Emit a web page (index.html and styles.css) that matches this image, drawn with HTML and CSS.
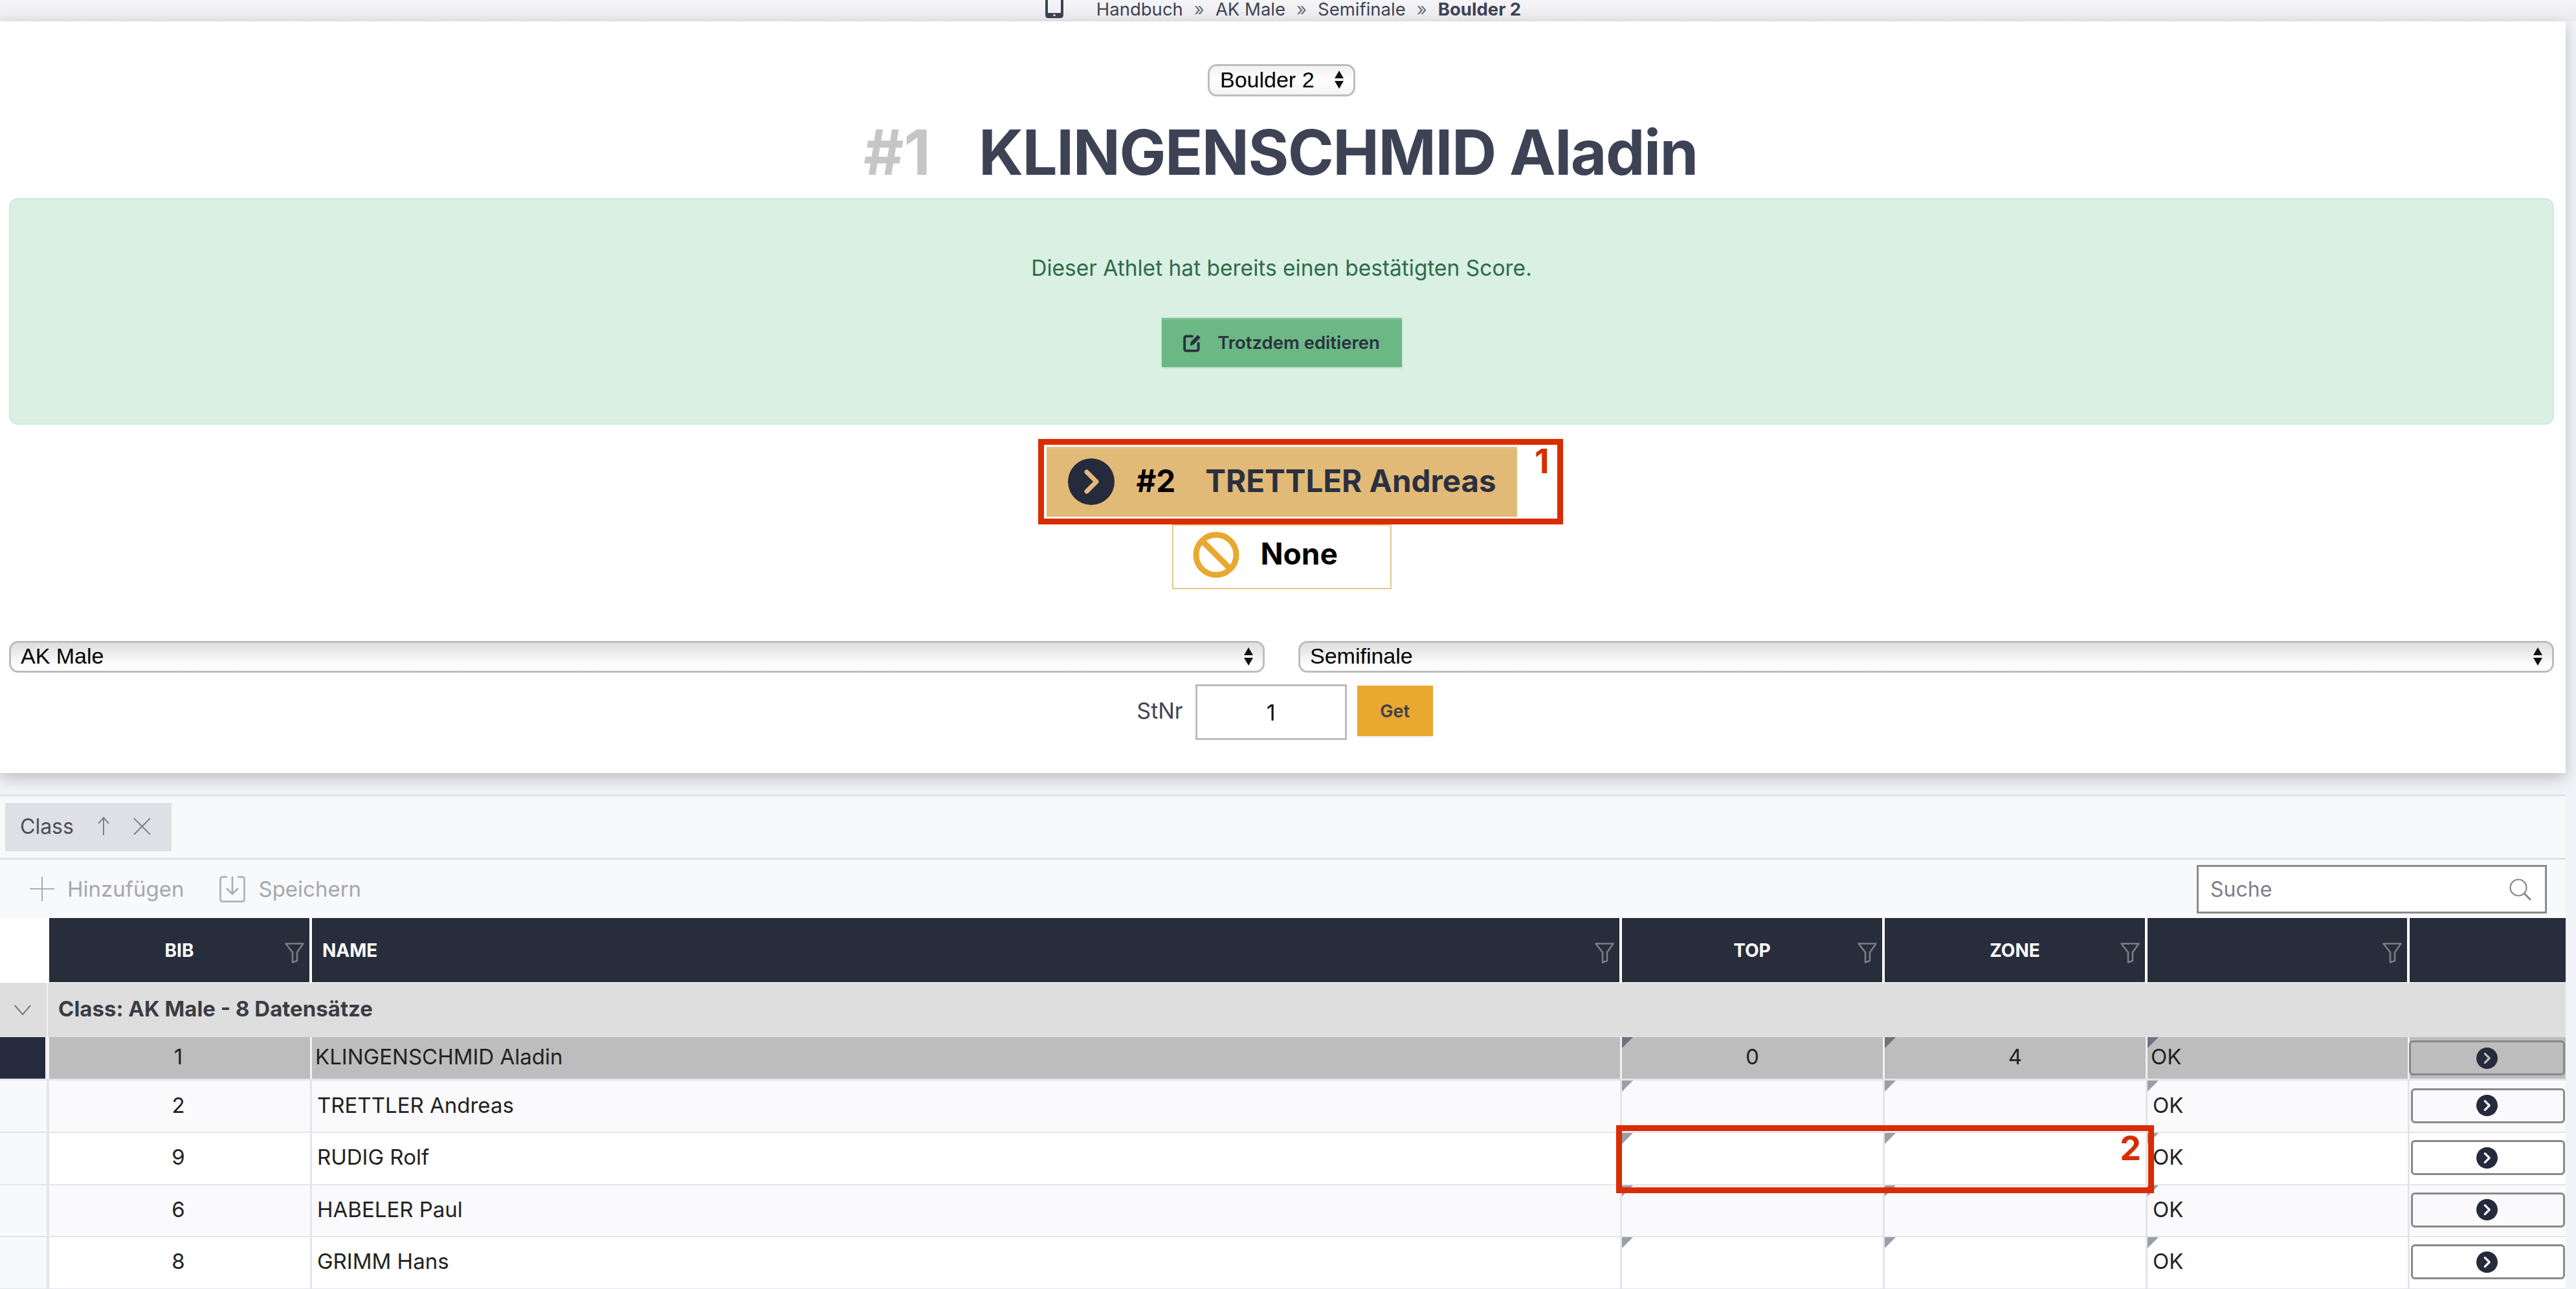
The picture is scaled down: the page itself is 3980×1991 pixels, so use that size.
FILE: index.html
```html
<!DOCTYPE html>
<html lang="en">
<head>
    <meta charset="UTF-8">
    <meta name="viewport" content="width=device-width, initial-scale=1.0">
    <title>Boulder 2</title>
    <link rel="stylesheet" href="styles.css">
</head>
<body>
    <svg class="icon-defs" width="0" height="0">
        <symbol id="i-filter" viewBox="0 0 30 32">
            <path d="M1.5 1.5H28.5L19 15V28L12 30.5V15Z" fill="none" stroke="#7c7d82" stroke-width="2.6" stroke-linejoin="round"/>
        </symbol>
        <symbol id="i-go" viewBox="0 0 72 72">
            <circle cx="36" cy="36" r="36" fill="#252b3c"/>
            <path d="M29 21L44 36L29 51" fill="none" stroke="currentColor" stroke-width="7" stroke-linecap="round" stroke-linejoin="round"/>
        </symbol>
    </svg>

    <div class="topbar">
        <svg class="phone" width="30" height="28" viewBox="0 0 30 28">
            <path d="M3 0V23Q3 26 6 26H24Q27 26 27 23V0" fill="none" stroke="#3d4355" stroke-width="4"/>
            <rect x="3" y="20" width="24" height="7" fill="#3d4355"/>
            <circle cx="15" cy="23.500" r="1.600" fill="#fff"/>
        </svg>
        <nav class="crumbs">
            <span>Handbuch</span><span class="sep">»</span>
            <span>AK Male</span><span class="sep">»</span>
            <span>Semifinale</span><span class="sep">»</span>
            <b>Boulder 2</b>
        </nav>
    </div>

    <main class="panel">
        <div class="boulder-pick">
            <div class="select-wrap select-small">
                <select class="native-select"><option>Boulder 2</option></select>
                <svg class="select-arrows" viewBox="0 0 16 28"><path d="M8 0L15 12H1ZM8 28L1 16H15Z" fill="#111"/></svg>
            </div>
        </div>

        <h1 class="athlete-title"><span class="athlete-no">#1</span><span class="athlete-name">KLINGENSCHMID Aladin</span></h1>

        <div class="alert-done">
            <p>Dieser Athlet hat bereits einen bestätigten Score.</p>
            <button class="btn-edit">
                <svg width="30" height="30" viewBox="0 0 28 28">
                    <path d="M13 5H5Q2 5 2 8V23Q2 26 5 26H19Q22 26 22 23V15" fill="none" stroke="#2b3040" stroke-width="3.600" stroke-linecap="round"/>
                    <path d="M10 19L11 13L21 3L25 7L15 17Z" fill="#2b3040"/>
                </svg>
                Trotzdem editieren
            </button>
        </div>

        <div class="next-wrap">
            <button class="btn-next">
                <svg class="next-icon" width="72" height="72"><use href="#i-go"/></svg>
                <span class="next-no">#2</span>
                <span class="next-name">TRETTLER Andreas</span>
            </button>
            <div class="mark mark-next"><span class="mark-no">1</span></div>
        </div>
        <div class="none-box">
            <svg width="72" height="72" viewBox="0 0 72 72">
                <circle cx="36" cy="36" r="31" fill="none" stroke="#e9a82f" stroke-width="9"/>
                <path d="M14 14L58 58" stroke="#e9a82f" stroke-width="9"/>
            </svg>
            <span class="none-text">None</span>
        </div>

        <div class="class-selects">
            <div class="select-wrap">
                <select class="native-select"><option>AK Male</option></select>
                <svg class="select-arrows" viewBox="0 0 16 28"><path d="M8 0L15 12H1ZM8 28L1 16H15Z" fill="#111"/></svg>
            </div>
            <div class="select-wrap">
                <select class="native-select"><option>Semifinale</option></select>
                <svg class="select-arrows" viewBox="0 0 16 28"><path d="M8 0L15 12H1ZM8 28L1 16H15Z" fill="#111"/></svg>
            </div>
        </div>

        <div class="bib-form">
            <label for="stnr">StNr</label>
            <input id="stnr" type="text" value="1">
            <button class="btn-get">Get</button>
        </div>
    </main>

    <section class="grid-panel">
        <div class="group-bar">
            <div class="group-chip">
                <span>Class</span>
                <svg width="20" height="30" viewBox="0 0 20 30"><path d="M10 29V2M2 11L10 2L18 11" fill="none" stroke="#7d8087" stroke-width="2"/></svg>
                <svg width="27" height="27" viewBox="0 0 27 27"><path d="M1 1L26 26M26 1L1 26" fill="none" stroke="#7d8087" stroke-width="2"/></svg>
            </div>
        </div>

        <div class="toolbar">
            <div class="tool-left">
                <span class="tool">
                    <svg width="38" height="38" viewBox="0 0 38 38"><path d="M19 0V38M0 19H38" stroke="#a9abb0" stroke-width="2"/></svg>
                    Hinzufügen
                </span>
                <span class="tool">
                    <svg width="40" height="41" viewBox="0 0 40 41">
                        <path d="M12 1.500H5Q1.500 1.500 1.500 5V36Q1.500 39.500 5 39.500H35Q38.500 39.500 38.500 36V5Q38.500 1.500 35 1.500H28" fill="none" stroke="#a9abb0" stroke-width="2.500"/>
                        <path d="M20 1V27M11 19L20 28L29 19" fill="none" stroke="#a9abb0" stroke-width="2.500"/>
                    </svg>
                    Speichern
                </span>
            </div>
            <div class="search-box">
                <span>Suche</span>
                <svg width="34" height="34" viewBox="0 0 34 34">
                    <circle cx="14" cy="14" r="12.500" fill="none" stroke="#85878c" stroke-width="2.200"/>
                    <path d="M23 23L33 33" stroke="#85878c" stroke-width="3"/>
                </svg>
            </div>
        </div>

        <div class="grid">
            <div class="grid-row grid-head">
                <div class="head-gutter"></div>
                <div class="head-cell head-center">BIB<svg class="filter"><use href="#i-filter"/></svg></div>
                <div class="head-cell">NAME<svg class="filter"><use href="#i-filter"/></svg></div>
                <div class="head-cell head-center">TOP<svg class="filter"><use href="#i-filter"/></svg></div>
                <div class="head-cell head-center">ZONE<svg class="filter"><use href="#i-filter"/></svg></div>
                <div class="head-cell"><svg class="filter"><use href="#i-filter"/></svg></div>
                <div class="head-cell head-last"></div>
            </div>

            <div class="group-row">
                <div class="group-toggle">
                    <svg width="26" height="16" viewBox="0 0 26 16"><path d="M1 1L13 15L25 1" fill="none" stroke="#77797e" stroke-width="2"/></svg>
                </div>
                <div class="group-label">Class: AK Male - 8 Datensätze</div>
            </div>

            <div class="grid-row data-row row-selected">
                <div class="gutter"></div>
                <div class="cell cell-num cell-bib">1</div>
                <div class="cell">KLINGENSCHMID Aladin</div>
                <div class="cell cell-num flag">0</div>
                <div class="cell cell-num flag">4</div>
                <div class="cell flag">OK</div>
                <div class="cell cell-action"><button class="btn-row"><svg width="33" height="33"><use href="#i-go"/></svg></button></div>
            </div>
            <div class="grid-row data-row row-first row-alt">
                <div class="gutter"></div>
                <div class="cell cell-num cell-bib">2</div>
                <div class="cell">TRETTLER Andreas</div>
                <div class="cell flag"></div>
                <div class="cell flag"></div>
                <div class="cell flag">OK</div>
                <div class="cell cell-action"><button class="btn-row"><svg width="33" height="33"><use href="#i-go"/></svg></button></div>
            </div>
            <div class="grid-row data-row">
                <div class="gutter"></div>
                <div class="cell cell-num cell-bib">9</div>
                <div class="cell">RUDIG Rolf</div>
                <div class="cell flag"></div>
                <div class="cell flag"></div>
                <div class="cell flag">OK</div>
                <div class="cell cell-action"><button class="btn-row"><svg width="33" height="33"><use href="#i-go"/></svg></button></div>
            </div>
            <div class="grid-row data-row row-alt">
                <div class="gutter"></div>
                <div class="cell cell-num cell-bib">6</div>
                <div class="cell">HABELER Paul</div>
                <div class="cell flag"></div>
                <div class="cell flag"></div>
                <div class="cell flag">OK</div>
                <div class="cell cell-action"><button class="btn-row"><svg width="33" height="33"><use href="#i-go"/></svg></button></div>
            </div>
            <div class="grid-row data-row">
                <div class="gutter"></div>
                <div class="cell cell-num cell-bib">8</div>
                <div class="cell">GRIMM Hans</div>
                <div class="cell flag"></div>
                <div class="cell flag"></div>
                <div class="cell flag">OK</div>
                <div class="cell cell-action"><button class="btn-row"><svg width="33" height="33"><use href="#i-go"/></svg></button></div>
            </div>

            <div class="mark mark-cells"><span class="mark-no">2</span></div>
        </div>
    </section>
</body>
</html>
```

FILE: styles.css
```css
* {
    box-sizing: border-box;
}

html,
body {
    height: 100%;
}

body {
    margin: 0;
    overflow: hidden;
    background-color: #f2f3f8;
    color: #3d4355;
    font-family: Inter, "Liberation Sans", sans-serif;
    font-size: 33px;
}

button {
    font-family: inherit;
    border: none;
    padding: 0;
    cursor: pointer;
}

.icon-defs {
    position: absolute;
}

/* top bar */
.topbar {
    height: 33px;
    overflow: hidden;
    display: flex;
    justify-content: center;
    align-items: flex-start;
    gap: 50px;
    padding-right: 16px;
    background: linear-gradient(#f5f5f8, #ebebef);
    font-size: 27.5px;
}

.phone {
    flex: none;
}

.crumbs {
    display: flex;
    gap: 17px;
    line-height: 28px;
}

.crumbs .sep {
    color: #6a6f7e;
}

/* upper panel */
.panel {
    position: relative;
    z-index: 1;
    height: 1161px;
    margin-right: 16px;
    padding: 0 18px 0 14px;
    background-color: #fff;
    box-shadow: 0 8px 22px rgba(0, 0, 0, 0.22);
}

.boulder-pick {
    display: flex;
    justify-content: center;
    padding-top: 66px;
}

.select-wrap {
    position: relative;
    flex: 1;
    height: 49px;
}

.select-small {
    flex: none;
    width: 228px;
    height: 50px;
}

.native-select {
    appearance: none;
    display: block;
    width: 100%;
    height: 100%;
    padding: 0 0 3px 15px;
    border: 3px solid #bdbdbd;
    border-radius: 14px;
    background: linear-gradient(#e2e2e2 10%, #fbfbfb 75%, #fff);
    color: #000;
    font-family: "Liberation Sans", Arial, sans-serif;
    font-size: 34px;
}

.select-small .native-select {
    padding: 0 0 2px 16px;
    background: linear-gradient(#f1f1f1, #fff 50%, #f4f4f4);
}

.select-arrows {
    position: absolute;
    right: 17px;
    top: 10px;
    width: 16px;
    height: 28px;
}

.athlete-title {
    display: flex;
    justify-content: center;
    gap: 74px;
    height: 157px;
    margin: 0;
    padding: 16px 3px 0 0;
    font-size: 96px;
    font-weight: 700;
    line-height: 141px;
}

.athlete-no {
    color: #c6c6c6;
}

.athlete-name {
    letter-spacing: -1.5px;
}

.alert-done {
    display: flex;
    flex-direction: column;
    align-items: center;
    height: 350px;
    padding-top: 88px;
    border: 2px solid #cdeadb;
    border-radius: 14px;
    background-color: #d9f0e3;
}

.alert-done p {
    margin: 0 0 59px;
    color: #2f6b47;
    font-size: 33.5px;
    line-height: 36px;
}

.btn-edit {
    display: flex;
    justify-content: center;
    align-items: center;
    gap: 23px;
    width: 371px;
    height: 76px;
    background-color: #6bb885;
    box-shadow: inset 0 3px 0 rgba(255, 255, 255, 0.14), 0 1px 3px rgba(0, 0, 0, 0.15);
    color: #2b3040;
    font-size: 27.5px;
    font-weight: 600;
}

.next-wrap {
    position: relative;
    width: 727px;
    height: 108px;
    margin: 34px auto 0;
}

.btn-next {
    display: flex;
    align-items: center;
    width: 100%;
    height: 100%;
    padding-left: 33px;
    background-color: #e2ba77;
    box-shadow: inset 0 3px 0 rgba(255, 255, 255, 0.14), 0 2px 2px rgba(0, 0, 0, 0.06);
    color: #2b3040;
    font-size: 47.5px;
    font-weight: 700;
}

.next-icon {
    color: #e2ba77;
}

.next-no {
    margin: 0 46px 4px 34px;
    color: #000;
}

.next-name {
    margin-bottom: 4px;
}

/* red annotation frames */
.mark {
    position: absolute;
    border: 9px solid #d92c00;
    pointer-events: none;
}

.mark-next {
    left: -13px;
    top: -12px;
    width: 811px;
    height: 132px;
}

.mark-cells {
    left: 2497px;
    top: 320px;
    width: 831px;
    height: 105px;
}

.mark-no {
    position: absolute;
    color: #d92c00;
    font-size: 52px;
    font-weight: 700;
    line-height: 52px;
}

.mark-next .mark-no {
    right: 12px;
    top: 0;
}

.mark-cells .mark-no {
    right: 11px;
    top: 1px;
}

.none-box {
    display: flex;
    align-items: center;
    gap: 33px;
    width: 339px;
    height: 100px;
    margin: 12px auto 0;
    padding: 0 0 6px 30px;
    border: 2px solid #e6c98a;
    color: #000;
    font-size: 46px;
    font-weight: 700;
}

.none-text {
    margin-bottom: 4px;
}

.class-selects {
    display: flex;
    gap: 52px;
    margin-top: 80px;
}

.bib-form {
    display: flex;
    justify-content: center;
    align-items: flex-start;
    margin-top: 18px;
    padding-left: 10px;
}

.bib-form label {
    margin-right: 19px;
    font-size: 34px;
    line-height: 82px;
}

.bib-form input {
    width: 234px;
    height: 86px;
    border: 3px solid #bcbcbc;
    background-color: #fff;
    color: #111;
    font-family: inherit;
    font-size: 34px;
    text-align: center;
}

.btn-get {
    width: 117px;
    height: 78px;
    margin: 2px 0 0 16px;
    background-color: #e9a82f;
    box-shadow: 0 2px 3px rgba(0, 0, 0, 0.08);
    color: #3a3f4f;
    font-size: 27px;
    font-weight: 600;
}

/* lower grid */
.grid-panel {
    margin: 33px 16px 0 0;
    border-top: 3px solid #e0e1e6;
    background-color: #f8f9fb;
}

.group-bar {
    height: 98px;
    padding: 10px 0 0 8px;
    border-bottom: 3px solid #e0e1e6;
}

.group-chip {
    display: flex;
    align-items: center;
    gap: 36px;
    width: 257px;
    height: 75px;
    padding: 0 0 3px 23px;
    background-color: #dfe0e5;
    color: #4a4e5a;
    font-size: 32px;
}

.toolbar {
    display: flex;
    justify-content: space-between;
    height: 90px;
    padding: 8px 29px 0 46px;
}

.tool-left {
    display: flex;
    gap: 55px;
}

.tool {
    display: flex;
    align-items: center;
    gap: 20px;
    height: 66px;
    margin-top: 4px;
    color: #a5a8ad;
}

.search-box {
    display: flex;
    justify-content: space-between;
    align-items: center;
    width: 541px;
    height: 75px;
    padding: 0 21px 0 18px;
    border: 3px solid #8a8a8a;
    background-color: #fff;
    color: #7d8087;
    font-size: 32px;
}

.grid {
    position: relative;
    background-color: #fff;
    color: #222;
}

.grid-row {
    display: grid;
    grid-template-columns: 76px 406px 2024px 406px 406px 405px 241px;
}

.grid-head {
    height: 100px;
    border-bottom: 1px solid #fff;
}

.head-gutter {
    background-color: #fff;
}

.head-cell {
    position: relative;
    display: flex;
    align-items: center;
    padding-left: 16px;
    border-right: 4px solid #fff;
    background-color: #282d3c;
    color: #fff;
    font-size: 28px;
    font-weight: 700;
}

.head-center {
    justify-content: center;
    padding: 0;
}

.head-last {
    border-right: none;
}

.filter {
    position: absolute;
    right: 8px;
    top: 38px;
    width: 30px;
    height: 32px;
}

.group-row {
    display: flex;
    height: 84px;
    background-color: #dedede;
}

.group-toggle {
    display: flex;
    justify-content: center;
    align-items: center;
    width: 74px;
    padding-right: 3px;
    border-right: 2px solid #f2f2f2;
}

.group-label {
    padding-left: 16px;
    color: #3a3d44;
    font-weight: 700;
    line-height: 80px;
}

.data-row {
    height: 80.5px;
    border-bottom: 2.5px solid #e4e4ea;
    background-color: #fff;
}

.row-alt {
    background-color: #fafafc;
}

.row-first {
    height: 84px;
    border-top: 3px solid #e4e4ea;
}

.gutter {
    border-right: 4px solid #e4e4ea;
    background-color: #f8f9fc;
}

.cell {
    position: relative;
    display: flex;
    align-items: center;
    padding: 0 0 4px 8px;
    border-right: 3px solid #e4e4ea;
}

.cell-num {
    justify-content: center;
    padding: 0 0 4px 0;
}

.cell-bib {
    padding-right: 4px;
}

.cell-action {
    padding: 0 1px 2px 2px;
    border-right: none;
}

.flag::before {
    content: "";
    position: absolute;
    left: 0;
    top: 0;
    border-top: 17px solid #9b9da8;
    border-right: 17px solid transparent;
}

.btn-row {
    display: flex;
    justify-content: center;
    align-items: center;
    width: 100%;
    height: 54px;
    padding-right: 4px;
    border: 3px solid #888;
    border-radius: 6px;
    background-color: transparent;
    color: #fff;
}

.row-selected {
    height: 64px;
    border-bottom: none;
    background-color: #bdbdbd;
}

.row-selected .gutter {
    border-right: 6px solid #f4f4f6;
    background-color: #252b3c;
}

.row-selected .cell {
    padding-left: 5px;
    border-right-color: #f2f2f2;
}

.row-selected .cell-num {
    padding-left: 0;
}

.row-selected .cell-action {
    padding: 0 1px 0 0;
    margin-left: -1px;
    border-right: none;
}

.row-selected .flag::before {
    border-top-color: #6f7280;
}

.row-selected .btn-row {
    padding-right: 0;
    color: #bdbdbd;
}
```
